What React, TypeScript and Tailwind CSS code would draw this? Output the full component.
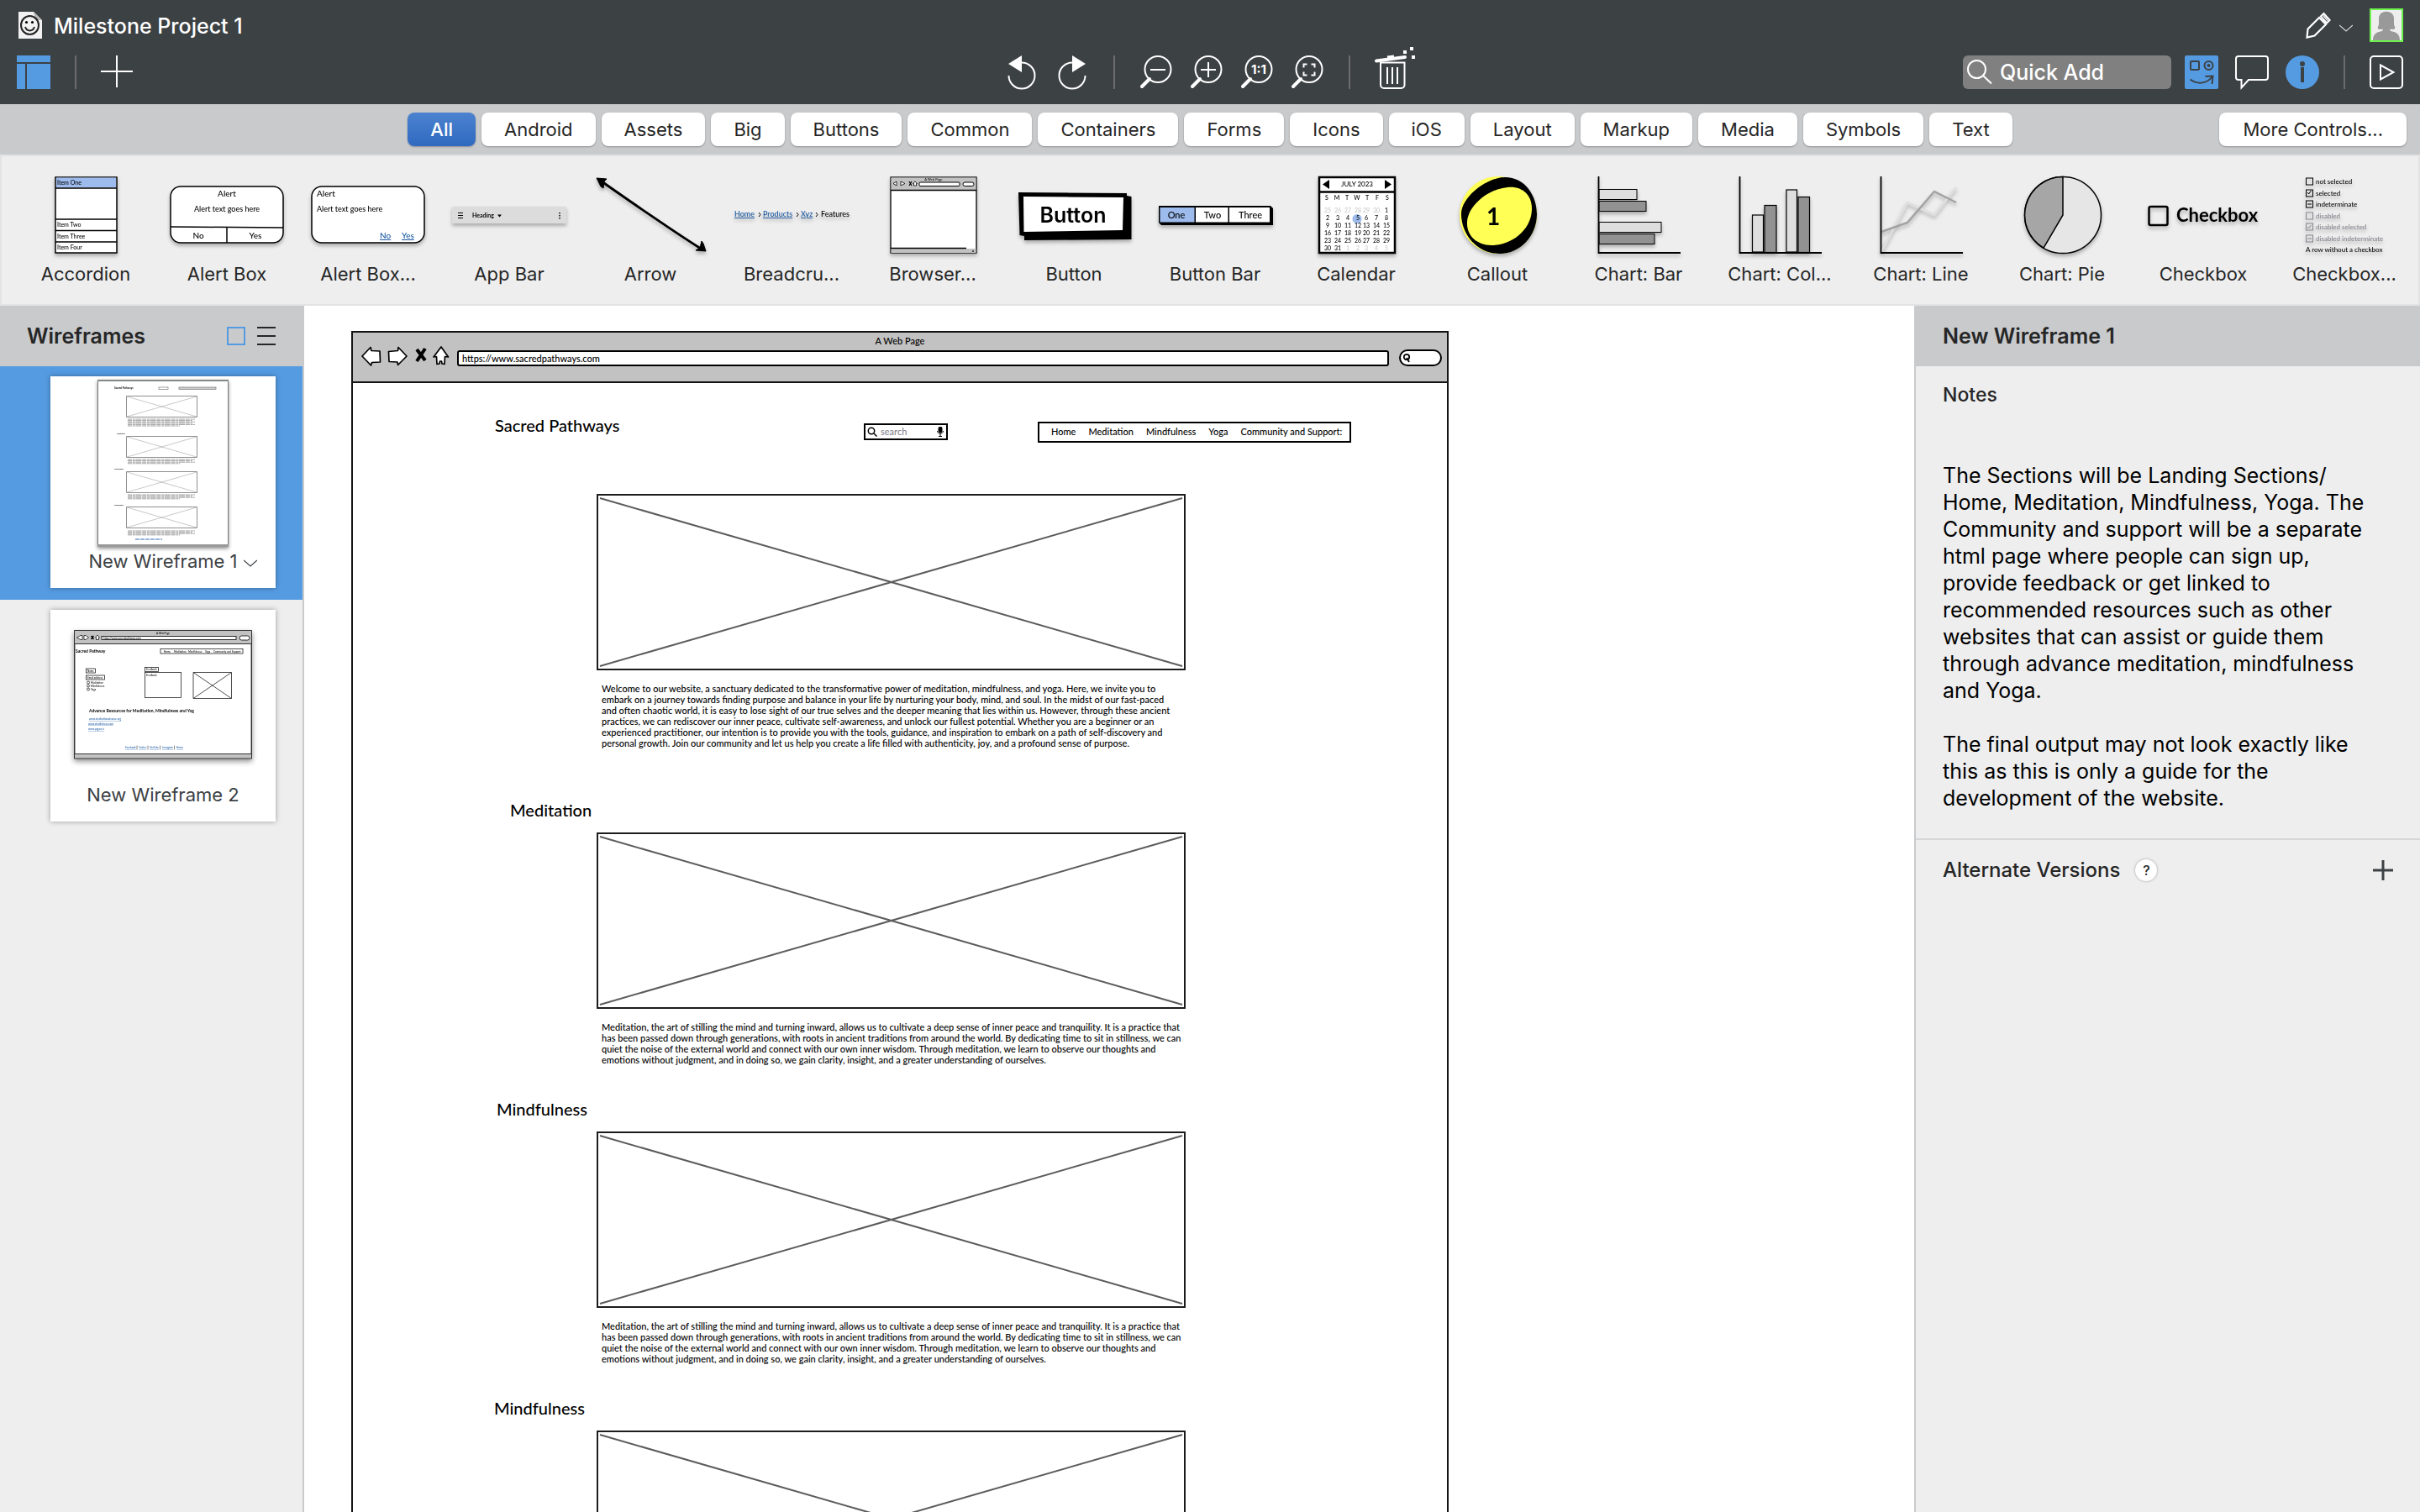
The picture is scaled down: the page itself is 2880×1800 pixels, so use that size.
import React from 'react';

const CATEGORIES = [
  'All', 'Android', 'Assets', 'Big', 'Buttons', 'Common', 'Containers', 'Forms',
  'Icons', 'iOS', 'Layout', 'Markup', 'Media', 'Symbols', 'Text',
];

const INTRO_LINES = [
  'Welcome to our website, a sanctuary dedicated to the transformative power of meditation, mindfulness, and yoga. Here, we invite you to',
  'embark on a journey towards finding purpose and balance in your life by nurturing your body, mind, and soul. In the midst of our fast-paced',
  'and often chaotic world, it is easy to lose sight of our true selves and the deeper meaning that lies within us. However, through these ancient',
  'practices, we can rediscover our inner peace, cultivate self-awareness, and unlock our fullest potential. Whether you are a beginner or an',
  'experienced practitioner, our intention is to provide you with the tools, guidance, and inspiration to embark on a path of self-discovery and',
  'personal growth. Join our community and let us help you create a life filled with authenticity, joy, and a profound sense of purpose.',
];

const MEDITATION_LINES = [
  'Meditation, the art of stilling the mind and turning inward, allows us to cultivate a deep sense of inner peace and tranquility. It is a practice that',
  'has been passed down through generations, with roots in ancient traditions from around the world. By dedicating time to sit in stillness, we can',
  'quiet the noise of the external world and connect with our own inner wisdom. Through meditation, we learn to observe our thoughts and',
  'emotions without judgment, and in doing so, we gain clarity, insight, and a greater understanding of ourselves.',
];

const NOTES =
  'The Sections will be Landing Sections/\nHome, Meditation, Mindfulness, Yoga. The Community and support will be a separate html page where people can sign up, provide feedback or get linked to recommended resources such as other websites that can assist or guide them through advance meditation, mindfulness and Yoga.\n\nThe final output may not look exactly like this as this is only a guide for the development of the website.';

/* ---------- Palette previews ---------- */

function Preview({ children }: { children: React.ReactNode }) {
  return (
    <svg
      viewBox="0 0 136 92"
      className="h-[92px] w-[136px] overflow-visible font-['Lato',sans-serif] font-medium drop-shadow-[0_3px_2px_rgba(0,0,0,0.28)]"
      aria-hidden="true"
    >
      {children}
    </svg>
  );
}

const AccordionPreview = () => (
  <Preview>
    <rect x="32" y="1" width="73" height="90" fill="#fff" stroke="#000" strokeWidth="1.5" />
    <rect x="33" y="1.500" width="71" height="12" fill="#9dbbec" />
    <path d="M32 14h73M32 51h73M32 64.500h73M32 78h73" stroke="#000" strokeWidth="1.500" />
    <g fontSize="7">
      <text x="34" y="10">Item One</text>
      <text x="34" y="60">Item Two</text>
      <text x="34" y="74">Item Three</text>
      <text x="34" y="87">Item Four</text>
    </g>
  </Preview>
);

const AlertPreview = () => (
  <Preview>
    <rect x="1" y="12" width="134" height="67" rx="12" fill="#fff" stroke="#000" strokeWidth="1.500" />
    <path d="M1 60l134 1M68 61v18" stroke="#000" strokeWidth="1.500" />
    <g textAnchor="middle" fontSize="10">
      <text x="68" y="24">Alert</text>
      <text x="68" y="42" fontSize="9">Alert text goes here</text>
      <text x="34" y="74">No</text>
      <text x="102" y="74">Yes</text>
    </g>
  </Preview>
);

const AlertLinksPreview = () => (
  <Preview>
    <rect x="1" y="12" width="134" height="67" rx="12" fill="#fff" stroke="#000" strokeWidth="1.500" />
    <text x="7" y="24" fontSize="10">Alert</text>
    <text x="7" y="42" fontSize="9">Alert text goes here</text>
    <g fill="#1b5aa5" fontSize="10" textDecoration="underline">
      <text x="82" y="74">No</text>
      <text x="108" y="74">Yes</text>
    </g>
  </Preview>
);

const AppBarPreview = () => (
  <Preview>
    <rect x="0" y="36" width="136" height="20" fill="#dcdcdc" />
    <path d="M7 43.500h6M7 46.500h6M7 49.500h6" stroke="#000" strokeWidth="1.200" />
    <text x="24" y="49" fontSize="7" fontWeight="700">Heading</text>
    <path d="M54 45.500h5l-2.500 3z" fill="#000" />
    <path d="M128 43v1.500M128 46v1.500M128 49v1.500" stroke="#000" strokeWidth="1.500" />
  </Preview>
);

const ArrowPreview = () => (
  <Preview>
    <path d="M10 6C50 34 90 62 128 86" stroke="#000" strokeWidth="2.800" fill="none" />
    <path d="M4 2l12 1-3 3-1 8-3-2zM134 89l-12-1 5-3 2-8 2 3z" fill="#000" stroke="#000" strokeWidth="1" />
  </Preview>
);

const BreadcrumbsPreview = () => (
  <Preview>
    <g fontSize="9">
      <g fill="#1b5aa5" textDecoration="underline">
        <text x="0" y="48">Home</text>
        <text x="34" y="48">Products</text>
        <text x="79" y="48">Xyz</text>
      </g>
      <text x="103" y="48">Features</text>
    </g>
    <path d="M29 43l2 2.500-2 2.500M74 43l2 2.500-2 2.500M97 43l2 2.500-2 2.500" stroke="#000" fill="none" />
  </Preview>
);

const BrowserPreview = () => (
  <Preview>
    <rect x="18" y="1" width="102" height="90" fill="#fff" stroke="#000" strokeWidth="1.300" />
    <rect x="18.500" y="1.500" width="101" height="15" fill="#c2c2c2" />
    <rect x="18.500" y="86" width="101" height="5" fill="#c2c2c2" />
    <path d="M18 16.500h102M18 85.500h90" stroke="#000" strokeWidth="1.300" />
    <text x="69" y="5" fontSize="4" textAnchor="middle">A Web Page</text>
    <path d="M25 6l-4 2.500 4 2.500zM30 6l5 2.500-5 2.500z" fill="#fff" stroke="#000" strokeWidth=".8" />
    <path d="M40 6l3 5M43 6l-3 5" stroke="#000" strokeWidth="1.200" />
    <path d="M44.500 8.500L47 6l2.500 2.500H48.500V11h-3V8.500z" fill="#fff" stroke="#000" strokeWidth=".8" />
    <rect x="52" y="7" width="48" height="4.500" rx="1" fill="#fff" stroke="#000" />
    <rect x="104" y="7" width="13" height="4.500" rx="2.200" fill="#fff" stroke="#000" />
    <path d="M115 88l2 2M117 88l-2 2" stroke="#000" strokeWidth=".6" />
  </Preview>
);

const ButtonPreview = () => (
  <Preview>
    <path d="M2 19L131 20 131 23 136.500 24 136.500 75 9 76 9 71 3.500 70z" fill="#000" />
    <path d="M8 24L127 25 126 64 8.500 66z" fill="#fff" />
    <text x="67" y="55" fontSize="25" fontWeight="600" textAnchor="middle" className="font-['Inter',sans-serif]">
      Button
    </text>
  </Preview>
);

const ButtonBarPreview = () => (
  <Preview>
    <path d="M1 35h133l3 3v20H4l-3-3z" fill="#000" />
    <rect x="2.500" y="37" width="41" height="17.500" fill="#9dbbec" />
    <rect x="45" y="37" width="38.500" height="17.500" fill="#fff" />
    <rect x="85" y="37" width="48" height="17.500" fill="#fff" />
    <g fontSize="11" textAnchor="middle">
      <text x="22" y="50">One</text>
      <text x="65" y="50">Two</text>
      <text x="110" y="50">Three</text>
    </g>
  </Preview>
);

function CalendarPreview() {
  const days = Array.from({ length: 42 }, (_, i) => {
    const d = i - 5;
    return { label: d < 1 ? d + 30 : d > 31 ? d - 31 : d, muted: d < 1 || d > 31 };
  });
  return (
    <Preview>
      <rect x="24" y="1" width="90" height="90" fill="#fff" stroke="#000" strokeWidth="2.500" />
      <path d="M23 18.500h92" stroke="#000" strokeWidth="2.500" />
      <path d="M36 4v11l-8-5.500zM102 4v11l8-5.500z" fill="#000" />
      <text x="69" y="12" fontSize="8" textAnchor="middle">JULY 2023</text>
      <circle cx="69" cy="50.500" r="5.500" fill="#9dbbec" />
      <g fontSize="7" textAnchor="middle">
        {'SMTWTFS'.split('').map((d, i) => (
          <text key={i} x={33 + i * 12} y="28">{d}</text>
        ))}
        {days.map((d, i) => (
          <text key={i} x={34 + (i % 7) * 12 - (i % 7 > 3 ? 2 : 0)} y={43 + Math.floor(i / 7) * 9} fill={d.muted ? '#c9c9c9' : '#000'}>
            {d.label}
          </text>
        ))}
      </g>
    </Preview>
  );
}

const CalloutPreview = () => (
  <Preview>
    <circle cx="69" cy="46" r="46" fill="#ffff55" />
    <path
      fillRule="evenodd"
      d="M77 1c24 0 38 22 38 44 0 26-20 47-44 47-28 0-46-24-46-47C25 24 56 1 77 1zM80 13c18-2 30 10 29 27-1 24-24 42-48 42-18 0-30-12-29-28C33 36 56 15 80 13z"
      fill="#000"
    />
    <text x="63" y="58" fontSize="28" fontWeight="700" textAnchor="middle">1</text>
  </Preview>
);

const BarChartPreview = () => (
  <Preview>
    <g stroke="#000" strokeWidth="1">
      <rect x="21" y="15.500" width="45" height="12" fill="#dedede" />
      <rect x="21" y="29.500" width="56" height="12" fill="#929292" />
      <rect x="21" y="54.500" width="74" height="12" fill="#dedede" />
      <rect x="21" y="68.500" width="66" height="12" fill="#929292" />
    </g>
    <path d="M20.500 0v91H118" stroke="#000" strokeWidth="1.800" fill="none" />
  </Preview>
);

const ColumnChartPreview = () => (
  <Preview>
    <g stroke="#000" strokeWidth="1.200">
      <rect x="35.500" y="46" width="13" height="44" fill="#dedede" />
      <rect x="50" y="34.500" width="14" height="56" fill="#929292" />
      <rect x="76" y="16" width="12.500" height="74" fill="#dedede" />
      <rect x="90" y="24.500" width="13.500" height="66" fill="#929292" />
    </g>
    <path d="M20.500 0v91H118" stroke="#000" strokeWidth="1.800" fill="none" />
  </Preview>
);

const LineChartPreview = () => (
  <Preview>
    <path d="M21 90L52 31 84 46 110 13" stroke="#dfdfdf" strokeWidth="2.500" fill="none" />
    <path d="M21 66L52 55 84 18 110 31" stroke="#a2a2a2" strokeWidth="2.500" fill="none" />
    <path d="M20.500 0v91H118" stroke="#000" strokeWidth="1.800" fill="none" />
  </Preview>
);

const PieChartPreview = () => (
  <Preview>
    <circle cx="69" cy="46" r="45.500" fill="#e6e6e6" stroke="#000" strokeWidth="1.500" />
    <path d="M69 .5V46L46 85.200A45.500 45.500 0 0 1 69 .5z" fill="#a6a6a6" stroke="#000" strokeWidth="1.500" />
  </Preview>
);

const CheckboxPreview = () => (
  <Preview>
    <rect x="3.500" y="36" width="22" height="22" rx="2" fill="none" stroke="#000" strokeWidth="2.500" />
    <text x="36" y="54" fontSize="22" fontWeight="700">Checkbox</text>
  </Preview>
);

function CheckboxGroupPreview() {
  const rows = [
    { label: 'not selected', mark: '', fill: '#000' },
    { label: 'selected', mark: 'M24 19l1.500 2 3-4', fill: '#000' },
    { label: 'indeterminate', mark: 'M24 33h5', fill: '#000' },
    { label: 'disabled', mark: '', fill: '#85858f' },
    { label: 'disabled selected', mark: 'M24 60l1.500 2 3-4', fill: '#85858f' },
    { label: 'disabled indeterminate', mark: 'M24 74h5', fill: '#85858f' },
  ];
  return (
    <Preview>
      <g fontSize="8">
        {rows.map((r, i) => (
          <g key={r.label} fill={r.fill}>
            <rect x="22.500" y={2 + Math.round(i * 13.6)} width="8" height="8" fill="none" stroke={r.fill} />
            <text x="34" y={9 + Math.round(i * 13.6)}>{r.label}</text>
            {r.mark && <path d={r.mark} stroke={r.fill} fill="none" />}
          </g>
        ))}
        <text x="22" y="90">A row without a checkbox</text>
      </g>
    </Preview>
  );
}

const CONTROLS: { label: string; preview: React.ComponentType }[] = [
  { label: 'Accordion', preview: AccordionPreview },
  { label: 'Alert Box', preview: AlertPreview },
  { label: 'Alert Box...', preview: AlertLinksPreview },
  { label: 'App Bar', preview: AppBarPreview },
  { label: 'Arrow', preview: ArrowPreview },
  { label: 'Breadcru...', preview: BreadcrumbsPreview },
  { label: 'Browser...', preview: BrowserPreview },
  { label: 'Button', preview: ButtonPreview },
  { label: 'Button Bar', preview: ButtonBarPreview },
  { label: 'Calendar', preview: CalendarPreview },
  { label: 'Callout', preview: CalloutPreview },
  { label: 'Chart: Bar', preview: BarChartPreview },
  { label: 'Chart: Col...', preview: ColumnChartPreview },
  { label: 'Chart: Line', preview: LineChartPreview },
  { label: 'Chart: Pie', preview: PieChartPreview },
  { label: 'Checkbox', preview: CheckboxPreview },
  { label: 'Checkbox...', preview: CheckboxGroupPreview },
];

/* ---------- Top toolbar ---------- */

function IconButton({ label, children }: { label: string; children: React.ReactNode }) {
  return (
    <button type="button" aria-label={label} className="h-10 w-10 shrink-0">
      <svg viewBox="0 0 40 40" className="h-10 w-10 overflow-visible" fill="none" stroke="#fff" strokeWidth="2">
        {children}
      </svg>
    </button>
  );
}

function Magnifier({ children }: { children: React.ReactNode }) {
  return (
    <>
      <circle cx="22" cy="16.500" r="15.500" />
      <path d="M12 28L3 37" strokeWidth="4" strokeLinecap="round" />
      {children}
    </>
  );
}

const Separator = () => <span className="mx-[9px] h-10 w-0.5 bg-[#6b6c6d]" />;

function TopBar() {
  return (
    <header className="flex h-31 shrink-0 flex-col bg-[#3c4144]">
      <div className="flex h-[60px] items-center justify-between pr-5 pl-[22px]">
        <div className="flex items-center gap-3.5">
          <svg viewBox="0 0 28 32" className="h-8 w-7" aria-hidden="true">
            <path d="M0 0h18l10 10v22H0z" fill="#f2f2f2" />
            <path d="M18 0l10 10H20z" fill="#b9b9b9" />
            <ellipse cx="13.500" cy="16" rx="10.500" ry="11" fill="none" stroke="#222" strokeWidth="2" />
            <path d="M8 18c2 6 9 6 11 0" fill="none" stroke="#222" strokeWidth="2" />
            <circle cx="9.500" cy="12.500" r="1.600" />
            <circle cx="16.500" cy="12.500" r="1.600" />
          </svg>
          <h1 className="pt-0.5 text-[25px] leading-8 font-medium text-white">Milestone Project 1</h1>
        </div>
        <div className="flex items-center gap-5">
          <button type="button" aria-label="Edit mode" className="flex items-center gap-2.5">
            <svg viewBox="0 0 30 32" className="h-8 w-[30px]" fill="none" stroke="#fff" strokeWidth="2.200">
              <path d="M1.500 30.500l1-10L16 7l8 8L10.500 28.500z" />
              <path d="M18 5.500l3.500-3.500 7 8-3.500 3.500z" />
              <path d="M21 4.500l5 6" strokeWidth="1.500" />
            </svg>
            <svg viewBox="0 0 16 10" className="mt-2 h-2.5 w-4" fill="none" stroke="#d5d6d7" strokeWidth="1.200">
              <path d="M0 1l8 7 8-7" />
            </svg>
          </button>
          <button type="button" aria-label="Account" className="h-10 w-10 border-2 border-[#6cf24d] bg-[#eee]">
            <svg viewBox="0 0 36 36" className="h-9 w-9" fill="#999">
              <path d="M9 10C9-1 27-1 27 10v7c0 2 2 3 1 5-2 2-5 0-6 1l1 2c6 1 11 3 11 11H2c0-8 5-10 11-11l1-2c-1-1-4 1-6-1-1-2 1-3 1-5z" />
            </svg>
          </button>
        </div>
      </div>

      <div className="grid h-[52px] grid-cols-[1fr_auto_1fr] items-center">
        <div className="flex items-center pl-5">
          <button type="button" aria-label="Toggle panels" className="h-10 w-10">
            <svg viewBox="0 0 40 40" className="h-10 w-10" fill="#559be2">
              <path d="M0 0h40v8H0zM0 10h10v30H0zM12 10h28v30H12z" />
            </svg>
          </button>
          <span className="mr-7 ml-[29px] h-10 w-0.5 bg-[#6b6c6d]" />
          <IconButton label="New wireframe">
            <path d="M20 0v38M1 19h38" />
          </IconButton>
        </div>

        <div className="flex items-center gap-5 pr-2">
          <IconButton label="Undo">
            <path d="M4.500 24A15.500 15.500 0 1 0 20 8.500" />
            <path d="M20 0v20L4 10z" fill="#fff" stroke="none" />
          </IconButton>
          <IconButton label="Redo">
            <path d="M35.500 24A15.500 15.500 0 1 1 20 8.500" />
            <path d="M20 0v20l16-10z" fill="#fff" stroke="none" />
          </IconButton>
          <Separator />
          <IconButton label="Zoom out">
            <Magnifier><path d="M13 17h18" /></Magnifier>
          </IconButton>
          <IconButton label="Zoom in">
            <Magnifier><path d="M13 17h18M22 8v18" /></Magnifier>
          </IconButton>
          <IconButton label="Actual size">
            <Magnifier>
              <text x="22" y="22" fontSize="15" fontWeight="700" textAnchor="middle" fill="#fff" stroke="none">1:1</text>
            </Magnifier>
          </IconButton>
          <IconButton label="Zoom to fit">
            <Magnifier>
              <path d="M15.500 14.500v-4h4M24.500 10.500h4v4M28.500 19.500v4h-4M19.500 23.500h-4v-4" />
            </Magnifier>
          </IconButton>
          <Separator />
          <IconButton label="Delete">
            <path d="M7 8.500h28.500V35a4 4 0 0 1-4 4H11a4 4 0 0 1-4-4z" />
            <path d="M15 14v20M21 14v20M27 14v20" />
            <path d="M2 6.500L36 2" strokeWidth="4" strokeLinecap="round" />
            <path d="M15 2.500l8-1" strokeWidth="4" />
            <path d="M34-6h4v4h-4zM42-10h4v4h-4zM44 0h4v4h-4z" fill="#fff" stroke="none" />
          </IconButton>
        </div>

        <div className="flex items-center justify-end pr-5">
          <label className="mr-4 flex h-10 w-[248px] items-center rounded-md bg-[#808080]">
            <svg viewBox="0 0 40 40" className="h-10 w-10 shrink-0" fill="none" stroke="#fff" strokeWidth="2">
              <circle cx="16.500" cy="16.500" r="10.500" />
              <path d="M24 24l10 9.500" />
            </svg>
            <input
              type="text"
              aria-label="Quick Add"
              placeholder="Quick Add"
              className="w-full min-w-0 bg-transparent pt-0.5 pl-1 text-[25px] font-medium text-white outline-none placeholder:text-white"
            />
          </label>
          <div className="flex items-center gap-5">
            <IconButton label="UI library">
              <rect width="40" height="40" rx="2" fill="#559be2" stroke="none" />
              <g stroke="#3c4144">
                <rect x="7" y="7" width="10" height="10" rx="1" />
                <circle cx="28.500" cy="12" r="5" />
                <circle cx="28.500" cy="12" r="2" fill="#3c4144" stroke="none" />
                <path d="M6.500 28.500c8 6 19 6 26-3M24.500 25l9-.5-1 9.500" />
              </g>
            </IconButton>
            <IconButton label="Comments">
              <path d="M4 1h32a3 3 0 0 1 3 3v22a3 3 0 0 1-3 3H16l-8.500 9.500V29H4a3 3 0 0 1-3-3V4a3 3 0 0 1 3-3z" />
            </IconButton>
            <IconButton label="Info">
              <circle cx="20" cy="20" r="20" fill="#559be2" stroke="none" />
              <circle cx="20" cy="10" r="3" fill="#3c4144" stroke="none" />
              <path d="M20 14v18" stroke="#3c4144" strokeWidth="4" />
            </IconButton>
            <Separator />
            <IconButton label="Present">
              <rect x="1" y="1" width="38" height="38" rx="4" />
              <path d="M13 11.500v17L28.500 20z" />
            </IconButton>
          </div>
        </div>
      </div>
    </header>
  );
}

function CategoryBar() {
  return (
    <nav className="grid h-15 shrink-0 grid-cols-[1fr_auto_1fr] items-center bg-[#c9cacc]">
      <div className="col-start-2 flex gap-[7px]">
        {CATEGORIES.map((c, i) => (
          <button
            key={c}
            type="button"
            className={
              i === 0
                ? 'h-10 rounded-lg bg-linear-to-b from-[#4c82cf] to-[#2f6ac0] px-[27px] text-[22px] font-medium text-white shadow-[0_1px_2px_rgba(0,0,0,0.3)]'
                : 'h-10 rounded-lg bg-white px-[27px] text-[22px] text-[#262626] shadow-[0_1px_2px_rgba(0,0,0,0.3)]'
            }
          >
            {c}
          </button>
        ))}
      </div>
      <button
        type="button"
        className="mr-4 h-10 justify-self-end rounded-lg bg-white px-7 text-[22px] text-[#262626] shadow-[0_1px_2px_rgba(0,0,0,0.3)]"
      >
        More Controls...
      </button>
    </nav>
  );
}

function ControlStrip() {
  return (
    <section
      aria-label="Controls"
      className="grid h-45 shrink-0 grid-cols-17 border-2 border-[#e3e3e3] bg-[#eee] pt-6 pr-1 pl-4"
    >
      {CONTROLS.map(({ label, preview: Art }) => (
        <button key={label} type="button" className="flex flex-col items-center">
          <Art />
          <span className="mt-2.5 text-[22px] leading-7 text-[#262626]">{label}</span>
        </button>
      ))}
    </section>
  );
}

/* ---------- Left panel ---------- */

function ThumbParagraph({ y, rows }: { y: number; rows: number }) {
  return (
    <>
      {Array.from({ length: rows }, (_, i) => (
        <path key={i} d={`M36 ${y + i * 1.6}h${i === rows - 1 ? 62 : 80 - (i % 2) * 3}`} stroke="#777" strokeWidth=".7" strokeDasharray="5 .8 3 .6 7 .8" />
      ))}
    </>
  );
}

function ThumbBox({ y }: { y: number }) {
  return (
    <g fill="none" stroke="#909090">
      <path d={`M34.500 ${y + 0.5}h84v25h-84z`} strokeWidth="1" />
      <path d={`M35 ${y + 1}l83 24M35 ${y + 25}l83-24`} strokeWidth=".5" />
    </g>
  );
}

function FirstThumb() {
  return (
    <svg viewBox="0 0 156 200" className="h-[200px] w-[156px] font-['Lato',sans-serif] drop-shadow-[0_2px_2px_rgba(0,0,0,0.45)]" aria-hidden="true">
      <rect x=".5" y=".5" width="155" height="198" fill="#fff" stroke="#777" />
      <path d="M0 1h156" stroke="#888" strokeWidth="2" />
      <path d="M0 197.500h156" stroke="#999" strokeWidth="3" />
      <text x="20" y="11" fontSize="3" fontWeight="700">Sacred Pathways</text>
      <rect x="73" y="9" width="11" height="2.500" fill="none" stroke="#777" strokeWidth=".7" />
      <rect x="97" y="9" width="44" height="2.500" fill="#ccc" stroke="#777" strokeWidth=".7" />
      <ThumbBox y={19} />
      <ThumbParagraph y={47} rows={6} />
      <text x="23" y="65" fontSize="2" fontWeight="700">Meditation</text>
      <ThumbBox y={67} />
      <ThumbParagraph y={95} rows={4} />
      <text x="20" y="107" fontSize="2" fontWeight="700">Mindfulness</text>
      <ThumbBox y={109} />
      <ThumbParagraph y={137} rows={4} />
      <text x="20" y="150" fontSize="2" fontWeight="700">Mindfulness</text>
      <ThumbBox y={151} />
      <ThumbParagraph y={180} rows={4} />
      <path d="M45 190h32" stroke="#1b5aa5" strokeDasharray="5 1" strokeWidth=".9" />
    </svg>
  );
}

function SecondThumb() {
  return (
    <svg viewBox="0 0 212 154" className="h-[154px] w-[212px] font-['Lato',sans-serif] font-medium drop-shadow-[0_3px_3px_rgba(0,0,0,0.45)]" aria-hidden="true">
      <rect x=".75" y=".75" width="210.500" height="152" fill="#fff" stroke="#222" strokeWidth="1.300" />
      <rect x="1" y="1" width="210" height="15" fill="#c2c2c2" />
      <rect x="1" y="148" width="210" height="4.500" fill="#c2c2c2" />
      <path d="M0 16.500h212M0 147.500h212" stroke="#333" />
      <text x="106" y="5" fontSize="3" textAnchor="middle">A Web Page</text>
      <path d="M8 6.500L3.500 9 8 11.500h2v-5zM12 6.500h2L17.500 9 14 11.500h-2z" fill="#fff" stroke="#000" strokeWidth=".7" />
      <path d="M20.500 7l3 4M23.500 7l-3 4" stroke="#000" strokeWidth="1.300" />
      <path d="M25.500 9L28 6l2.500 3h-1v2.500h-3V9z" fill="#fff" stroke="#000" strokeWidth=".7" />
      <rect x="33" y="7.500" width="160" height="4" fill="#fff" stroke="#000" strokeWidth=".8" />
      <text x="35" y="10.500" fontSize="3">https://www.sacredpathways.com</text>
      <rect x="197" y="7" width="12" height="5" rx="2.500" fill="#fff" stroke="#000" strokeWidth=".8" />
      <text x="2" y="27" fontSize="5" fontWeight="700">Sacred Pathway</text>
      <rect x="103" y="22.500" width="98" height="5.500" fill="#fff" stroke="#222" strokeWidth=".8" />
      <g fontSize="3">
        <text x="107" y="26.500">Home</text>
        <text x="119" y="26.500">Meditation</text>
        <text x="136" y="26.500">Mindfulness</text>
        <text x="156" y="26.500">Yoga</text>
        <text x="166" y="26.500">Community and Support:</text>
        <text x="16" y="49.500">Name</text>
        <text x="16" y="57.500">Email address</text>
        <text x="20" y="63.500">Meditation</text>
        <text x="20" y="67.500">Mindfulness</text>
        <text x="20" y="71.500">Yoga</text>
        <text x="86" y="48">Feedback</text>
        <text x="86" y="54.500">Feedback</text>
      </g>
      <g fill="none" stroke="#222" strokeWidth=".8">
        <rect x="14.500" y="46" width="11" height="5" />
        <rect x="14.500" y="54" width="22" height="5" />
        <rect x="84.500" y="44.500" width="16" height="5" />
        <rect x="84.500" y="50.500" width="43" height="30" />
        <path d="M142 50.500h45.500v31H142zl45.500 31M142 81.500l45.500-31" />
        <circle cx="17" cy="62.500" r="1.500" />
        <circle cx="17" cy="66.500" r="1.500" />
        <circle cx="17" cy="70.500" r="1.500" />
      </g>
      <text x="18" y="98" fontSize="5" fontWeight="700">Advance Resources for Meditation, Mindfulness and Yog</text>
      <g fontSize="3" fill="#1b5aa5" textDecoration="underline">
        <text x="18" y="107">www.meditationadvance.org</text>
        <text x="17" y="112.500">www.mindfulness.com</text>
        <text x="17" y="119">www.yoga.net</text>
        <text x="61" y="141">Facebook</text>
        <text x="77" y="141">Twitter</text>
        <text x="90" y="141">YouTube</text>
        <text x="105" y="141">Instagram</text>
        <text x="122" y="141">Home</text>
      </g>
      <path d="M75 137.500v5M88 137.500v5M102.500 137.500v5M119.500 137.500v5" stroke="#555" strokeWidth=".7" />
    </svg>
  );
}

function WireframeList() {
  return (
    <aside className="w-[362px] shrink-0 border-r-2 border-[#c9cacc] bg-[#eee]">
      <div className="flex h-18 items-center bg-[#c9cacc] pr-8 pl-8">
        <h2 className="flex-1 pt-0.5 text-[25px] font-semibold text-[#262626]">Wireframes</h2>
        <button type="button" aria-label="Thumbnail view" className="h-[22px] w-[22px] border-2 border-[#559be2]" />
        <button type="button" aria-label="List view" className="ml-3.5 flex h-[22px] w-[22px] flex-col justify-between">
          <span className="h-0.5 w-full bg-[#262626]" />
          <span className="h-0.5 w-full bg-[#262626]" />
          <span className="h-0.5 w-full bg-[#262626]" />
        </button>
      </div>
      <ul>
        <li className="bg-[#559be2] pt-3 pr-8 pb-3.5 pl-15">
          <div className="flex h-[252px] flex-col items-center bg-white pt-1 shadow-[0_0_6px_rgba(0,0,0,0.35)]">
            <FirstThumb />
            <button type="button" className="flex items-center gap-2 pl-6 text-[22px] leading-8 text-[#3c4144]">
              New Wireframe 1
              <svg viewBox="0 0 16 10" className="mt-1.5 h-2.5 w-4" fill="none" stroke="#3c4144" strokeWidth="1.200">
                <path d="M0 1l8 7 8-7" />
              </svg>
            </button>
          </div>
        </li>
        <li className="pt-3 pr-8 pb-3.5 pl-15">
          <div className="flex h-[252px] flex-col items-center bg-white pt-6 shadow-[0_0_6px_rgba(0,0,0,0.35)]">
            <SecondThumb />
            <button type="button" className="mt-[26px] text-[22px] leading-8 text-[#3c4144]">New Wireframe 2</button>
          </div>
        </li>
      </ul>
    </aside>
  );
}

/* ---------- Canvas ---------- */

function ImageBox() {
  return (
    <div className="ml-[290px] h-[210px] w-[701px] border-2 border-[#1c1c1c]">
      <svg viewBox="0 0 698 206" preserveAspectRatio="none" className="h-full w-full" stroke="#5c5c5c" strokeWidth="2">
        <path d="M2 3L696 203M2 203L696 3" />
      </svg>
    </div>
  );
}

function Copy({ lines }: { lines: string[] }) {
  return (
    <p className="mt-[15px] ml-[296px] text-[11px] leading-[13px] font-medium whitespace-nowrap">
      {lines.map((l) => (
        <span key={l} className="block">{l}</span>
      ))}
    </p>
  );
}

function MockBrowser() {
  return (
    <article className="mt-[30px] ml-14 w-[1306px] shrink-0 border-2 border-[#141414] bg-white font-['Lato',sans-serif] text-black">
      <div className="h-15 border-b-2 border-[#141414] bg-[#c2c2c2]">
        <p className="h-[18px] text-center text-[11px] leading-5 font-medium">A Web Page</p>
        <div className="flex h-6 items-center pr-1.5 pl-2.5">
          <svg viewBox="0 0 106 24" className="mb-1 h-6 w-[106px]" fill="#fff" stroke="#000" strokeWidth="1.700" strokeLinejoin="round" aria-hidden="true">
            <path d="M1 12L11 1.500l1 4 10 .5 .5 13-10 .5-1 3.500z" />
            <path d="M54 12L44 1.500l-.5 4-11 1 .5 12 10 .5 .5 3.500z" />
            <path d="M66 4l10 13M76 3L66 18" strokeWidth="4" />
            <path d="M95 1l8.500 12-4-.5-.5 9-3-.5-.5-3-2 0-.5 3-3 .5-.5-9-3.500 .5z" />
          </svg>
          <div className="ml-2 h-[19px] flex-1 rounded-[3px] border-2 border-black bg-white pl-1 text-[11px] leading-4 font-medium">
            https://www.sacredpathways.com
          </div>
          <div className="ml-3 flex h-5 w-[51px] items-center rounded-[10px] border-2 border-black bg-white pl-0.5">
            <svg viewBox="0 0 10 12" className="h-3 w-2.5" fill="none" stroke="#000" strokeWidth="1.800">
              <circle cx="5" cy="5" r="3.200" />
              <path d="M5 6l3 5" />
            </svg>
          </div>
        </div>
      </div>

      <div className="mt-[38px] flex h-[94px] items-start">
        <h3 className="ml-[169px] w-[439px] text-[20px] leading-6 font-medium">Sacred Pathways</h3>
        <label className="mt-2.5 flex h-5 w-[100px] items-center border-2 border-black bg-white px-0.5">
          <svg viewBox="0 0 12 12" className="h-3 w-3 shrink-0" fill="none" stroke="#000" strokeWidth="1.500">
            <circle cx="5" cy="5" r="3.700" />
            <path d="M8 8l3.500 3.500" />
          </svg>
          <input
            type="search"
            aria-label="Search"
            placeholder="search"
            className="w-full min-w-0 bg-transparent pl-1 text-[11px] leading-4 font-medium outline-none placeholder:text-[#85858f]"
          />
          <svg viewBox="0 0 10 12" className="h-3 w-2.5 shrink-0" fill="none" stroke="#000">
            <rect x="3" y="0" width="4" height="7" rx="2" fill="#000" />
            <path d="M1.500 5c0 4 7 4 7 0M5 8v3.500M3 11.500h4" />
          </svg>
        </label>
        <nav className="mt-2 ml-[107px] flex h-[25px] w-[373px] items-center gap-[15px] border-2 border-black pl-3.5 text-[11px] font-medium whitespace-nowrap">
          <a href="#home">Home</a>
          <a href="#meditation">Meditation</a>
          <a href="#mindfulness">Mindfulness</a>
          <a href="#yoga">Yoga</a>
          <a href="#community">Community and Support:</a>
        </nav>
      </div>

      <ImageBox />
      <Copy lines={INTRO_LINES} />

      <h3 className="mt-[61px] mb-[15px] ml-[187px] text-[20px] leading-6 font-medium">Meditation</h3>
      <ImageBox />
      <Copy lines={MEDITATION_LINES} />

      <h3 className="mt-10 mb-[15px] ml-[171px] text-[20px] leading-6 font-medium">Mindfulness</h3>
      <ImageBox />
      <Copy lines={MEDITATION_LINES} />

      <h3 className="mt-10 mb-[15px] ml-[168px] text-[20px] leading-6 font-medium">Mindfulness</h3>
      <ImageBox />
    </article>
  );
}

/* ---------- Right panel ---------- */

function Inspector() {
  return (
    <aside className="flex w-[602px] shrink-0 flex-col border-l-2 border-[#c9cacc] bg-[#eee] text-[#262626]">
      <h2 className="flex h-18 shrink-0 items-center bg-[#c9cacc] pt-0.5 pl-8 text-[25px] font-semibold">New Wireframe 1</h2>
      <section className="border-b-2 border-[#d5d6d7] pt-5 pr-12 pb-8 pl-8">
        <label htmlFor="notes" className="block text-[23px] leading-7 font-medium">Notes</label>
        <textarea
          id="notes"
          rows={13}
          defaultValue={NOTES}
          className="mt-[66px] block w-full resize-none overflow-hidden bg-transparent text-[25px] leading-8 text-black outline-none"
        />
      </section>
      <section className="flex h-[70px] items-center pt-0.5 pr-8 pl-8">
        <h3 className="text-[24px] font-medium">Alternate Versions</h3>
        <button
          type="button"
          className="ml-[18px] h-[26px] w-[26px] rounded-full bg-white text-center text-[16px] leading-[26px] font-medium shadow-[0_0_3px_rgba(0,0,0,0.35)]"
        >
          ?
        </button>
        <button type="button" aria-label="Add version" className="ml-auto">
          <svg viewBox="0 0 24 24" className="h-6 w-6" stroke="#3c4144" strokeWidth="3">
            <path d="M12 0v24M0 12h24" />
          </svg>
        </button>
      </section>
    </aside>
  );
}

export default function App() {
  return (
    <div className="flex h-screen flex-col overflow-hidden bg-white font-['Inter',sans-serif]">
      <TopBar />
      <CategoryBar />
      <ControlStrip />
      <div className="flex min-h-0 flex-1">
        <WireframeList />
        <main className="flex min-w-0 flex-1 items-start overflow-hidden bg-white">
          <MockBrowser />
        </main>
        <Inspector />
      </div>
    </div>
  );
}
